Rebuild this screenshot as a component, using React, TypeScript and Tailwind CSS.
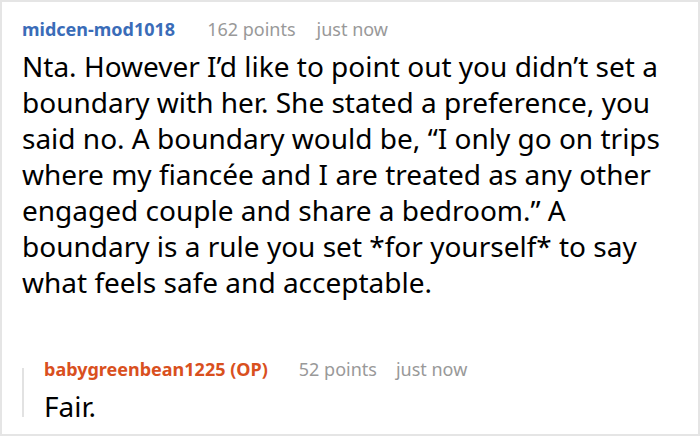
export default function App() {
  return (
    <div
      className="w-[700px] h-[436px] bg-white border-2 border-[#e5e5e5] pl-[20px] pr-[4px] pt-[14px] text-black"
      style={{ fontFamily: '"Noto Sans", "Open Sans", sans-serif' }}
    >
      <div className="flex items-baseline text-[18px] leading-[26px]">
        <span className="font-bold text-[#3a6cb8]">midcen-mod1018</span>
        <span className="ml-[32px] text-[#999999]">162 points</span>
        <span className="ml-[21px] text-[#999999]">just now</span>
      </div>
      <p className="mt-[6px] text-[28px] leading-[36px] whitespace-nowrap">
        Nta. However I’d like to point out you didn’t set a<br />
        boundary with her. She stated a preference, you<br />
        said no. A boundary would be, “I only go on trips<br />
        where my fiancée and I are treated as any other<br />
        engaged couple and share a bedroom.” A<br />
        boundary is a rule you set *for yourself* to say<br />
        what feels safe and acceptable.
      </p>
      <div className="mt-[56px] flex">
        <div className="w-[2px] bg-[#e2e2e2] mt-[12px] mb-[7px]" />
        <div className="pl-[20px]">
          <div className="flex items-baseline text-[18px] leading-[26px]">
            <span className="font-bold text-[#d9501e]">babygreenbean1225 (OP)</span>
            <span className="ml-[31px] text-[#999999]">52 points</span>
            <span className="ml-[19px] text-[#999999]">just now</span>
          </div>
          <p className="mt-[6px] text-[28px] leading-[36px]">Fair.</p>
        </div>
      </div>
    </div>
  );
}
